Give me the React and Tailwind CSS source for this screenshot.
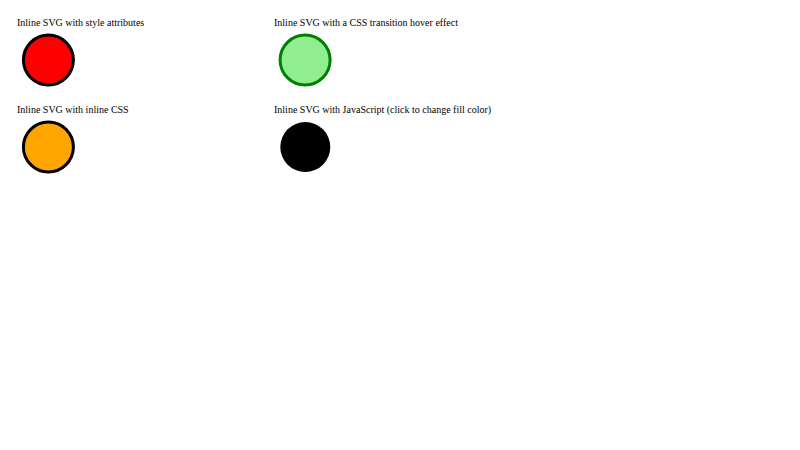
import React, { useState } from "react";

const colors = ["black", "red", "blue", "green", "purple", "orange"];

export default function App() {
  const [fillIndex, setFillIndex] = useState(0);

  // cycle the fill color on click
  const handleClick = () => setFillIndex((i) => (i + 1) % colors.length);

  return (
    <div
      className="min-h-screen bg-white text-black pl-[17px] pt-[16px]"
      style={{ fontFamily: '"Liberation Serif", "Times New Roman", serif' }}
    >
      <div className="grid grid-cols-[257px_257px] gap-y-[13px]">
        {/* Style attributes */}
        <div className="flex flex-col">
          <p className="text-[10px] leading-[14px]">Inline SVG with style attributes</p>
          <svg width="62" height="60" viewBox="0 0 62 60" className="block">
            <circle cx="31.4" cy="30" r="25" fill="#ff0000" stroke="#000000" strokeWidth="3" />
          </svg>
        </div>

        {/* CSS transition hover */}
        <div className="flex flex-col">
          <p className="text-[10px] leading-[14px]">Inline SVG with a CSS transition hover effect</p>
          <svg width="62" height="60" viewBox="0 0 62 60" className="block">
            <circle
              cx="31.1"
              cy="30"
              r="25"
              strokeWidth="3"
              className="fill-[#90ee90] stroke-[#008000] transition-colors duration-500 hover:fill-[#008000]"
            />
          </svg>
        </div>

        {/* Inline CSS */}
        <div className="flex flex-col">
          <p className="text-[10px] leading-[14px]">Inline SVG with inline CSS</p>
          <svg width="62" height="60" viewBox="0 0 62 60" className="block">
            <circle cx="31.4" cy="30" r="25" fill="#ffa500" stroke="#000000" strokeWidth="3" />
          </svg>
        </div>

        {/* JavaScript click */}
        <div className="flex flex-col">
          <p className="text-[10px] leading-[14px]">
            Inline SVG with JavaScript (click to change fill color)
          </p>
          <svg width="62" height="60" viewBox="0 0 62 60" className="block cursor-pointer" onClick={handleClick}>
            <circle cx="31.3" cy="30" r="25" fill={colors[fillIndex]} />
          </svg>
        </div>
      </div>
    </div>
  );
}
